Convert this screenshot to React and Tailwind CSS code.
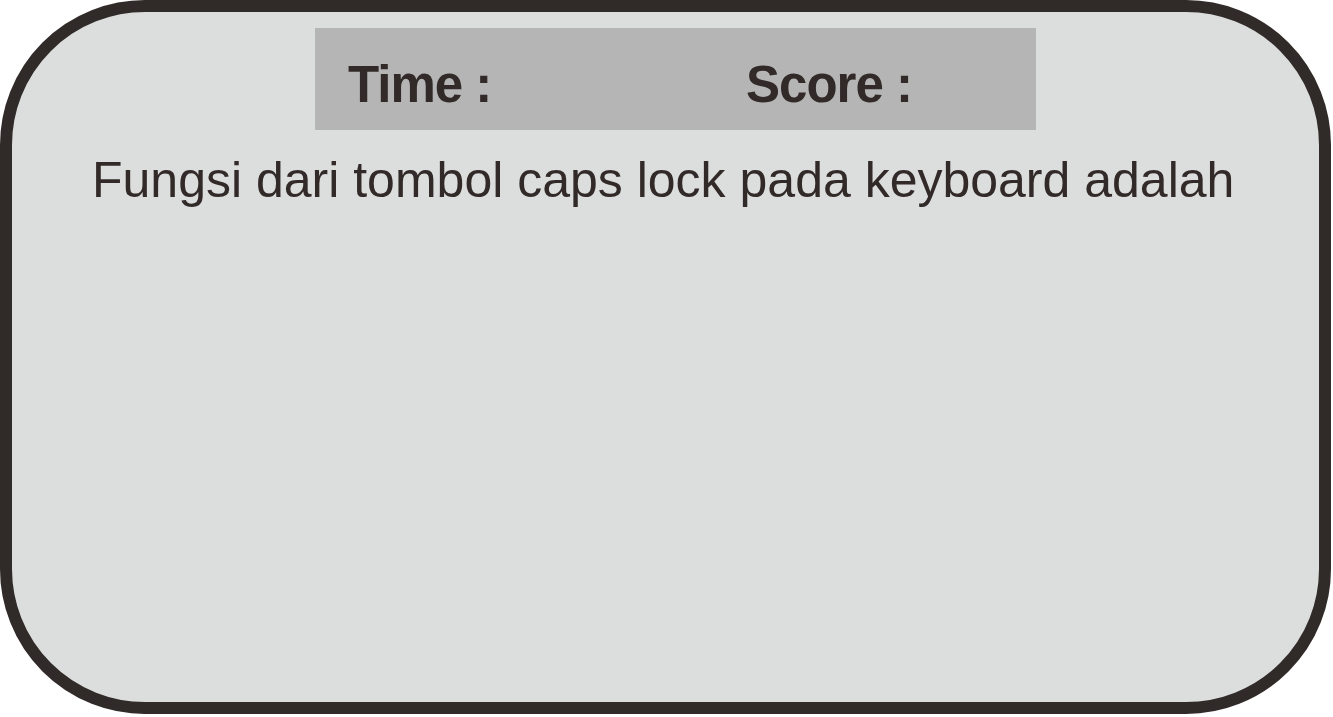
export default function App() {
  return (
    <div className="w-[1333px] h-[717px] bg-white overflow-hidden" style={{ fontFamily: '"Liberation Sans", Arial, sans-serif' }}>
      <div className="w-[1331px] h-[714px] border-[12px] border-[#302a28] rounded-[145px] bg-[#dcdddd] flex flex-col items-start">
        {/* Header bar */}
        <div className="mt-[16px] ml-[303px] w-[721px] h-[102px] bg-[#b5b5b5] flex items-start pt-[31px] pl-[33px] text-[#322a29] font-bold text-[51px] leading-none tracking-[-1px]">
          <span className="w-[398px]">Time :</span>
          <span>Score :</span>
        </div>

        {/* Question */}
        <p className="mt-[25px] ml-[80px] text-[50px] leading-none text-[#322a29] whitespace-nowrap">
          Fungsi dari tombol caps lock pada keyboard adalah
        </p>
      </div>
    </div>
  )
}
